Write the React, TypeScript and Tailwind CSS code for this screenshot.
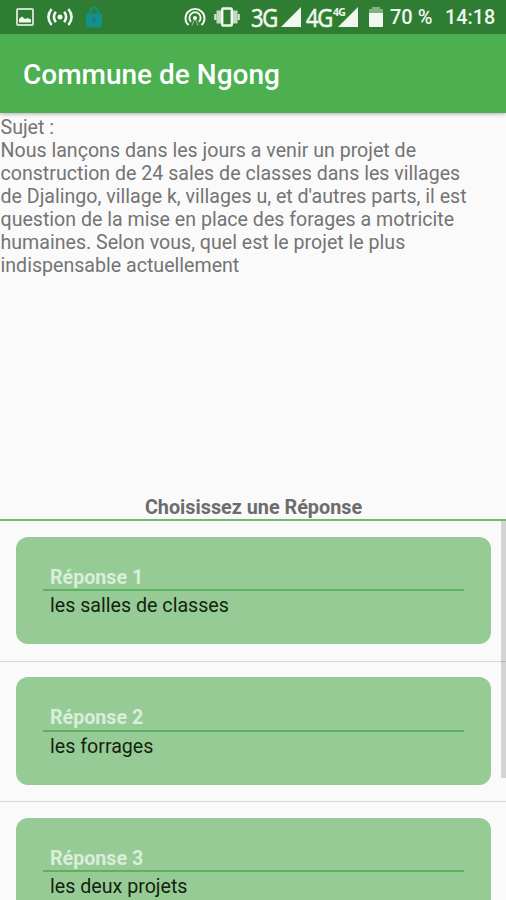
interface Answer {
  title: string
  text: string
}

const answers: Answer[] = [
  { title: 'Réponse 1', text: 'les salles de classes' },
  { title: 'Réponse 2', text: 'les forrages' },
  { title: 'Réponse 3', text: 'les deux projets' }
]

const subjectLines = [
  'Sujet :',
  'Nous lançons dans les jours a venir un projet de',
  'construction de 24 sales de classes dans les villages',
  "de Djalingo, village k, villages u, et d'autres parts, il est",
  'question de la mise en place des forages a motricite',
  'humaines. Selon vous, quel est le projet le plus',
  'indispensable actuellement'
]

function SignalIcon({ className }: { className: string }) {
  return (
    <svg viewBox="0 0 20 20" className={className}>
      <path d="M20 0V20H0Z" fill="currentColor" />
    </svg>
  )
}

function NetworkLabel({ children }: { children: string }) {
  return (
    <span className="block origin-left scale-x-[0.88] font-['Open_Sans',sans-serif] text-[25px] leading-[36px] tracking-[-1.5px] [-webkit-text-stroke:0.6px_#f1f8f0]">
      {children}
    </span>
  )
}

function StatusBar() {
  return (
    <div className="relative z-20 flex h-[34px] shrink-0 items-center bg-[#2f7d32] text-[#f1f8f0]">
      <svg viewBox="0 0 18 18" className="ml-4 h-[18px] w-[18px] shrink-0">
        <rect x="1" y="1" width="16" height="16" rx="1" fill="none" stroke="#c9dfc9" strokeWidth="2" />
        <path d="M3 14.5V11L6 8.5L9 11L11.5 10L15 11.5V14.5Z" fill="currentColor" />
      </svg>
      <svg viewBox="0 0 26 20" className="ml-[13px] h-5 w-[26px] shrink-0" fill="none" stroke="currentColor" strokeWidth="2.6">
        <circle cx="13" cy="10" r="2.5" fill="currentColor" stroke="none" />
        <path d="M8.8 4.8Q5 10 8.8 15.2M17.2 4.8Q21 10 17.2 15.2" />
        <path d="M4.6 2Q-1.7 10 4.6 18M21.4 2Q27.7 10 21.4 18" />
      </svg>
      <svg viewBox="0 0 18 22" className="ml-3 h-[22px] w-[18px] shrink-0">
        <path d="M5 8V5.5A4 4 0 0 1 13 5.5V8" fill="none" stroke="#11908c" strokeWidth="2.2" />
        <rect x="1" y="7.5" width="16" height="14" rx="2" fill="#11908c" />
        <circle cx="9" cy="14.3" r="2" fill="#25777a" />
      </svg>

      <svg viewBox="0 0 22 20" className="ml-[81px] h-5 w-[22px] shrink-0" fill="none" stroke="currentColor" strokeWidth="1.9">
        <path d="M4.5 18A9.5 9.3 0 1 1 17.5 18" />
        <path d="M7 14.8A5.6 5.6 0 1 1 15 14.8" />
        <circle cx="11" cy="11" r="2" fill="currentColor" stroke="none" />
        <path d="M11 11L8 18.5M11 11L14 18.5" strokeWidth="1" opacity=".6" />
      </svg>
      <svg viewBox="0 0 26 20" className="ml-2 h-5 w-[26px] shrink-0">
        <path d="M4.8 3.5V16.5M21.2 3.5V16.5" stroke="currentColor" strokeWidth="4.6" opacity=".75" />
        <path d="M1.3 7V13M24.7 7V13" stroke="currentColor" strokeWidth="2.2" opacity=".85" />
        <rect x="8.2" y="1.5" width="9.6" height="17" rx="1" fill="none" stroke="currentColor" strokeWidth="2.4" />
      </svg>
      <div className="ml-[11px] w-[30px] shrink-0">
        <NetworkLabel>3G</NetworkLabel>
      </div>
      <SignalIcon className="h-5 w-5 shrink-0" />
      <div className="ml-[5px] w-[27px] shrink-0">
        <NetworkLabel>4G</NetworkLabel>
      </div>
      <div className="relative h-5 w-[25px] shrink-0">
        <SignalIcon className="absolute bottom-0 right-0 h-5 w-5" />
        <svg viewBox="0 0 15 12" className="absolute -top-px left-0 h-3 w-[15px]">
          <path d="M0 0H13.5V7L9 11H0Z" fill="#2f7d32" />
        </svg>
        <span className="absolute -top-px left-0 font-['Open_Sans',sans-serif] text-[10.5px] font-bold leading-[12px] tracking-[-0.8px]">4G</span>
      </div>
      <svg viewBox="0 0 16 20" className="ml-2.5 h-5 w-4 shrink-0">
        <path d="M4 0H12V2H15V7H1V2H4Z" fill="#80b482" />
        <path d="M1 6H15V19Q15 20 14 20H2Q1 20 1 19Z" fill="currentColor" />
      </svg>
      <span className="ml-[6px] w-[55px] shrink-0 whitespace-nowrap text-[20px] font-medium leading-[37px]">70 %</span>
      <span className="shrink-0 text-[19.8px] font-medium leading-[37px]">14:18</span>
    </div>
  )
}

function AnswerCard({ title, text }: Answer) {
  return (
    <li className="h-[140.7px] shrink-0 border-b border-[#d8d8d8] pl-4 pr-[15px] pt-[15.6px]">
      <div className="h-[107.5px] rounded-[12px] bg-[#96cb96] pl-[27px] pr-[27px] pt-[29px]">
        <h2 className="h-[25.4px] border-b-2 border-[#5db161] pl-[7px] text-[19.65px] font-bold leading-[24.4px] text-[#d9eeda]">
          {title}
        </h2>
        <p className="pl-[7px] text-[19.65px] leading-[29.6px] text-[#14230f]">{text}</p>
      </div>
    </li>
  )
}

export default function App() {
  return (
    <div className="flex h-[900px] w-[506px] flex-col overflow-hidden bg-[#fafafa] font-['Roboto',sans-serif]">
      <StatusBar />
      <header className="z-10 flex h-[78.5px] shrink-0 items-center bg-[#4caf50] pl-[23px] shadow-[0_1px_4px_rgba(0,0,0,0.3)]">
        <h1 className="whitespace-nowrap pt-[3px] text-[28px] font-medium text-white">Commune de Ngong</h1>
      </header>

      <section className="h-[380.5px] shrink-0 pl-[0.5px] pt-[3px] text-[19.6px] leading-[23px] text-[#747474]">
        {subjectLines.map((line) => (
          <p key={line} className="whitespace-nowrap">{line}</p>
        ))}
      </section>

      <h2 className="h-[28px] shrink-0 border-b-2 border-[#6abd6e] pl-px text-center text-[19.8px] font-bold leading-[29.5px] text-[#6c6c6c]">
        Choisissez une Réponse
      </h2>

      <main className="relative flex-1 overflow-hidden">
        <ul>
          {answers.map((answer) => (
            <AnswerCard key={answer.title} {...answer} />
          ))}
        </ul>
        <div className="absolute right-0 top-0 h-[257px] w-[5px] bg-black/15" />
      </main>
    </div>
  )
}
